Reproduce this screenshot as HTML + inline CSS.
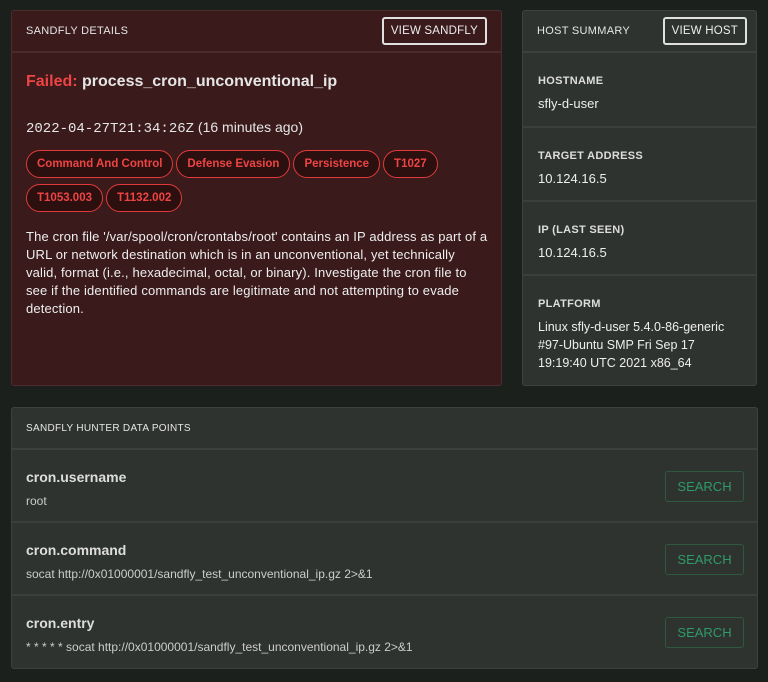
<!DOCTYPE html>
<html><head><style>
*{box-sizing:border-box;margin:0;padding:0}
body{width:768px;height:682px;background:#1c201c;font-family:"Liberation Sans",sans-serif;color:#e6e6e6;position:relative;overflow:hidden}
.p{position:absolute;border:1px solid #3e423e;border-radius:3px}
.red{left:11px;top:10px;width:491px;height:376px;background:#3a1a1a;border-color:#4c2c2c}
.gray{background:#2f332f}
.hd{height:42px;border-bottom:2px solid rgba(255,255,255,0.07);display:flex;align-items:center;justify-content:space-between;padding:0 14px 0 14px;font-size:11px;letter-spacing:.3px}
.btn{border:2px solid #e0e0e0;border-radius:3px;font-size:11.5px;padding:6px 7px;letter-spacing:.2px;color:#eee}
.tag{display:inline-block;border:1px solid #e03a3a;border-radius:14px;color:#ee4444;font-weight:bold;font-size:11.5px;padding:7px 10px;margin:0 3px 6px 0;background:#2c1010}
.sec{border-bottom:2px solid rgba(255,255,255,0.06);padding:0 15px}
.lab{font-size:11px;font-weight:bold;letter-spacing:.3px;color:#ddd}
.val{font-size:13px;margin-top:8px;color:#eee;line-height:18px}
.row{height:73px;border-bottom:2px solid rgba(255,255,255,0.06);position:relative;padding:19px 14px}
.row b{font-size:14px;color:#ddd}
.row div{font-size:12px;color:#ccc;margin-top:7px}
.srch{position:absolute;right:13px;top:21px;width:79px;height:31px;border:1px solid #2c5a40;border-radius:3px;color:#2f9a6a;font-size:13px;text-align:center;line-height:29px}
</style></head><body>
<div class="p red">
 <div class="hd" style="border-color:#4a2a2a"><span>SANDFLY DETAILS</span><span class="btn">VIEW SANDFLY</span></div>
 <div style="padding:20px 14px">
  <div style="font-size:16px;font-weight:bold"><span style="color:#ee4444">Failed:</span> process_cron_unconventional_ip</div>
  <div style="font-size:14px;margin-top:28px;"><span style="font-family:'Liberation Mono',monospace">2022-04-27T21:34:26Z</span> (16 minutes ago)</div>
  <div style="margin-top:13px">
   <span class="tag">Command And Control</span><span class="tag">Defense Evasion</span><span class="tag">Persistence</span><span class="tag">T1027</span><br>
   <span class="tag">T1053.003</span><span class="tag">T1132.002</span>
  </div>
  <div style="font-size:13px;letter-spacing:.15px;line-height:18px;margin-top:10px;color:#eee;white-space:nowrap">The cron file '/var/spool/cron/crontabs/root' contains an IP address as part of a<br>URL or network destination which is in an unconventional, yet technically<br>valid, format (i.e., hexadecimal, octal, or binary). Investigate the cron file to<br>see if the identified commands are legitimate and not attempting to evade<br>detection.</div>
 </div>
</div>
<div class="p gray" style="left:522px;top:10px;width:235px;height:376px">
 <div class="hd" style="padding-right:9px"><span>HOST SUMMARY</span><span class="btn">VIEW HOST</span></div>
 <div class="sec" style="height:75px;padding-top:22px"><div class="lab">HOSTNAME</div><div class="val">sfly-d-user</div></div>
 <div class="sec" style="height:74px;padding-top:22px"><div class="lab">TARGET ADDRESS</div><div class="val">10.124.16.5</div></div>
 <div class="sec" style="height:74px;padding-top:22px"><div class="lab">IP (LAST SEEN)</div><div class="val">10.124.16.5</div></div>
 <div class="sec" style="border:none;padding-top:22px"><div class="lab">PLATFORM</div><div class="val" style="font-size:12.5px">Linux sfly-d-user 5.4.0-86-generic #97-Ubuntu SMP Fri Sep 17 19:19:40 UTC 2021 x86_64</div></div>
</div>
<div class="p gray" style="left:11px;top:407px;width:747px;height:262px">
 <div class="hd" style="font-size:10px">SANDFLY HUNTER DATA POINTS</div>
 <div class="row"><b>cron.username</b><div>root</div><span class="srch">SEARCH</span></div>
 <div class="row"><b>cron.command</b><div>socat http://0x01000001/sandfly_test_unconventional_ip.gz 2&gt;&amp;1</div><span class="srch">SEARCH</span></div>
 <div class="row" style="border:none"><b>cron.entry</b><div>* * * * * socat http://0x01000001/sandfly_test_unconventional_ip.gz 2&gt;&amp;1</div><span class="srch">SEARCH</span></div>
</div>
</body></html>
